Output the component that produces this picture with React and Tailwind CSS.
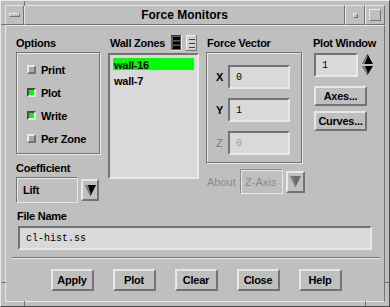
const raised = "border-2 border-t-[#e8e8e8] border-l-[#e8e8e8] border-r-[#737373] border-b-[#737373]";
const sunken = "border-2 border-t-[#737373] border-l-[#737373] border-r-[#e8e8e8] border-b-[#e8e8e8]";
const etched = "border border-[#737373] shadow-[inset_1px_1px_0_#e8e8e8,1px_1px_0_#e8e8e8]";
const label = "font-bold text-[11px] tracking-[-0.25px] leading-[14px] text-black whitespace-nowrap";
const mono = "font-['Liberation_Mono','Courier_New',monospace] text-[10px]";

function Check({ on, text }) {
  return (
    <div className="flex items-center h-[23px]">
      <span
        className={
          on
            ? "w-[9px] h-[9px] border-2 border-t-[#4a4a4a] border-l-[#4a4a4a] border-r-[#e8e8e8] border-b-[#e8e8e8] bg-[#00ff00]"
            : "w-[9px] h-[9px] border-2 border-t-[#e8e8e8] border-l-[#e8e8e8] border-r-[#737373] border-b-[#737373] bg-[#a8a8a8]"
        }
      />
      <span className={label + " ml-[5px]"}>{text}</span>
    </div>
  );
}

function DownArrow({ disabled }) {
  const c = disabled ? "#6a6a6a" : "#000";
  return (
    <svg width="11" height="11" viewBox="0 0 11 11">
      <polygon points="0,0 11,0 5.5,11" fill={c} />
      <polygon points="0,0 3,0 5.5,8 5.5,11" fill="#808080" />
    </svg>
  );
}

function OptionButton({ disabled, className }) {
  return (
    <div className={raised + " flex items-center justify-center bg-[#bfbfbf] " + className}>
      <DownArrow disabled={disabled} />
    </div>
  );
}

function VecRow({ name, value, disabled }) {
  return (
    <div className="flex items-center h-[24px]">
      <span
        className={
          disabled
            ? "w-[12px] text-[11px] leading-[14px] text-[#7a7a7a]"
            : "w-[12px] " + label
        }
      >
        {name}
      </span>
      <div className={sunken + " w-[62px] h-[24px] bg-[#d9d9d9] flex items-center pl-[6px] " + mono + (disabled ? " text-[#9a9a9a]" : " text-black")}>
        {value}
      </div>
    </div>
  );
}

function PushButton({ children, className }) {
  return (
    <div className={raised + " flex items-center justify-center bg-[#bfbfbf] " + label + " " + className}>
      {children}
    </div>
  );
}

export default function App() {
  return (
    <div className="relative w-[390px] h-[307px] bg-[#bfbfbf] border border-t-[#e8e8e8] border-l-[#e8e8e8] border-r-[#4a4a4a] border-b-[#4a4a4a] p-[4px] flex flex-col font-['Liberation_Sans',Arial,sans-serif] overflow-hidden">
      {/* frame grips */}
      <div className="absolute left-[23px] top-0 w-px h-[5px] bg-[#737373]" />
      <div className="absolute left-[23px] bottom-0 w-px h-[5px] bg-[#737373]" />
      <div className="absolute right-[23px] bottom-0 w-px h-[5px] bg-[#737373]" />
      <div className="absolute left-0 top-[23px] w-[5px] h-px bg-[#737373]" />
      <div className="absolute left-0 bottom-[23px] w-[5px] h-px bg-[#737373]" />
      <div className="absolute right-0 bottom-[23px] w-[5px] h-px bg-[#737373]" />

      {/* title bar */}
      <div className="flex h-[20px] shrink-0">
        <div className="w-[19px] border border-t-[#e8e8e8] border-l-[#e8e8e8] border-r-[#737373] border-b-[#737373] flex items-center justify-center">
          <div className="w-[11px] h-[4px] border border-t-[#e8e8e8] border-l-[#e8e8e8] border-r-[#737373] border-b-[#737373]" />
        </div>
        <div className="flex-1 border border-t-[#e8e8e8] border-l-[#e8e8e8] border-r-[#737373] border-b-[#737373] flex items-center justify-center font-bold text-[12px] text-black">
          Force Monitors
        </div>
        <div className="w-[20px] border border-t-[#e8e8e8] border-l-[#e8e8e8] border-r-[#737373] border-b-[#737373] flex items-center justify-center">
          <div className="w-[5px] h-[5px] border border-t-[#e8e8e8] border-l-[#e8e8e8] border-r-[#737373] border-b-[#737373]" />
        </div>
        <div className="w-[20px] border border-t-[#e8e8e8] border-l-[#e8e8e8] border-r-[#737373] border-b-[#737373] flex items-center justify-center">
          <div className="w-[12px] h-[12px] border border-t-[#e8e8e8] border-l-[#e8e8e8] border-r-[#737373] border-b-[#737373]" />
        </div>
      </div>

      {/* content */}
      <div className="flex-1 border border-t-[#e8e8e8] border-l-[#e8e8e8] border-r-[#737373] border-b-[#e8e8e8] pt-[10px] pl-[10px] flex flex-col">
        <div className="flex">
          {/* Options / Coefficient */}
          <div className="w-[84px] shrink-0 flex flex-col">
            <div className={label}>Options</div>
            <div className={etched + " mt-[2px] h-[102px] pt-[5px] pl-[10px]"}>
              <Check text="Print" />
              <Check on text="Plot" />
              <Check on text="Write" />
              <Check text="Per Zone" />
            </div>
            <div className={label + " mt-[7px]"}>Coefficient</div>
            <div className="flex items-center mt-[2px] h-[26px]">
              <div className="w-[62px] h-[26px] border border-t-[#737373] border-l-[#737373] border-r-[#e8e8e8] border-b-[#e8e8e8] shadow-[inset_1px_1px_0_#e8e8e8] flex items-center pl-[6px]">
                <span className={label}>Lift</span>
              </div>
              <OptionButton className="ml-[3px] w-[18px] h-[22px]" />
            </div>
          </div>

          {/* Wall Zones */}
          <div className="w-[91px] shrink-0 ml-[8px] flex flex-col">
            <div className="flex items-center h-[14px]">
              <span className={label + " ml-[2px]"}>Wall Zones</span>
              <svg className="ml-[6px]" width="11" height="16" viewBox="0 0 11 16">
                <rect x="0" y="0" width="11" height="16" fill="#5a5a5a" />
                <rect x="0" y="0" width="11" height="1" fill="#3a3a3a" />
                <rect x="10" y="0" width="1" height="16" fill="#e8e8e8" />
                <rect x="0" y="15" width="11" height="1" fill="#e8e8e8" />
                <rect x="2" y="2" width="7" height="3" fill="#000" />
                <rect x="2" y="6.5" width="7" height="3" fill="#000" />
                <rect x="2" y="11" width="7" height="3" fill="#000" />
              </svg>
              <svg className="ml-[4px]" width="11" height="16" viewBox="0 0 11 16">
                <rect x="0" y="0" width="11" height="16" fill="#d0d0d0" />
                <rect x="0" y="0" width="11" height="1" fill="#f0f0f0" />
                <rect x="0" y="0" width="1" height="16" fill="#f0f0f0" />
                <rect x="10" y="0" width="1" height="16" fill="#737373" />
                <rect x="0" y="15" width="11" height="1" fill="#737373" />
                <rect x="3" y="4" width="6" height="1" fill="#404040" />
                <rect x="3" y="8" width="6" height="1" fill="#404040" />
                <rect x="3" y="12" width="6" height="1" fill="#404040" />
              </svg>
            </div>
            <div className={sunken + " mt-[3px] h-[126px] bg-[#d9d9d9] pt-[3px] px-[3px] flex flex-col gap-[4px]"}>
              <div className={label + " h-[12px] leading-[12px] bg-[#00ff00] pl-[1px]"}>wall-16</div>
              <div className={label + " h-[12px] leading-[12px] pl-[1px]"}>wall-7</div>
            </div>
          </div>

          {/* Force Vector */}
          <div className="w-[99px] shrink-0 ml-[7px] flex flex-col">
            <div className={label + " ml-[1px]"}>Force Vector</div>
            <div className={etched + " mt-[2px] w-[96px] h-[111px] pt-[12px] pl-[9px] flex flex-col gap-[9px]"}>
              <VecRow name="X" value="0" />
              <VecRow name="Y" value="1" />
              <VecRow name="Z" value="0" disabled />
            </div>
            <div className="flex items-center mt-[6px]">
              <span className="text-[11px] leading-[14px] text-[#8a8a8a] ml-[1px] w-[33px]">About</span>
              <div className="w-[43px] h-[25px] border border-t-[#8a8a8a] border-l-[#8a8a8a] border-r-[#e8e8e8] border-b-[#e8e8e8] shadow-[inset_1px_1px_0_#e8e8e8] flex items-center pl-[4px]">
                <span className="text-[11px] leading-[14px] text-[#8a8a8a] whitespace-nowrap">Z-Axis</span>
              </div>
              <OptionButton disabled className="ml-[3px] w-[19px] h-[22px]" />
            </div>
          </div>

          {/* Plot Window */}
          <div className="w-[64px] shrink-0 ml-[8px] flex flex-col">
            <div className={label}>Plot Window</div>
            <div className="flex items-center mt-[3px] h-[24px]">
              <div className={sunken + " ml-[1px] w-[44px] h-[24px] bg-[#d9d9d9] flex items-center pl-[6px] text-black " + mono}>1</div>
              <svg className="ml-[4px]" width="11" height="22" viewBox="0 0 11 22">
                <polygon points="5.5,0 11,10 0,10" fill="#000" />
                <polygon points="5.5,0 5.5,3 2.5,10 0,10" fill="#808080" />
                <polygon points="0,12 11,12 5.5,21" fill="#000" />
                <polygon points="0,12 3,12 5.5,18 5.5,21" fill="#808080" />
              </svg>
            </div>
            <PushButton className="ml-[1px] mt-[9px] w-[53px] h-[20px]">Axes...</PushButton>
            <PushButton className="ml-[1px] mt-[5px] w-[53px] h-[20px]">Curves...</PushButton>
          </div>
        </div>

        {/* File Name */}
        <div className={label + " mt-[6px] ml-[1px]"}>File Name</div>
        <div className={sunken + " mt-[3px] ml-[2px] w-[354px] h-[24px] bg-[#d9d9d9] flex items-center pl-[6px] text-black " + mono}>
          cl-hist.ss
        </div>

        <div className="mt-[7px] -ml-[4px] w-[368px] h-[2px] border-t border-t-[#737373] border-b border-b-[#e8e8e8]" />

        <div className="mt-[10px] w-[368px] flex justify-center gap-[19px] -ml-[4px]">
          <PushButton className="w-[43px] h-[22px]">Apply</PushButton>
          <PushButton className="w-[43px] h-[22px]">Plot</PushButton>
          <PushButton className="w-[43px] h-[22px]">Clear</PushButton>
          <PushButton className="w-[43px] h-[22px]">Close</PushButton>
          <PushButton className="w-[43px] h-[22px]">Help</PushButton>
        </div>
      </div>
    </div>
  );
}
